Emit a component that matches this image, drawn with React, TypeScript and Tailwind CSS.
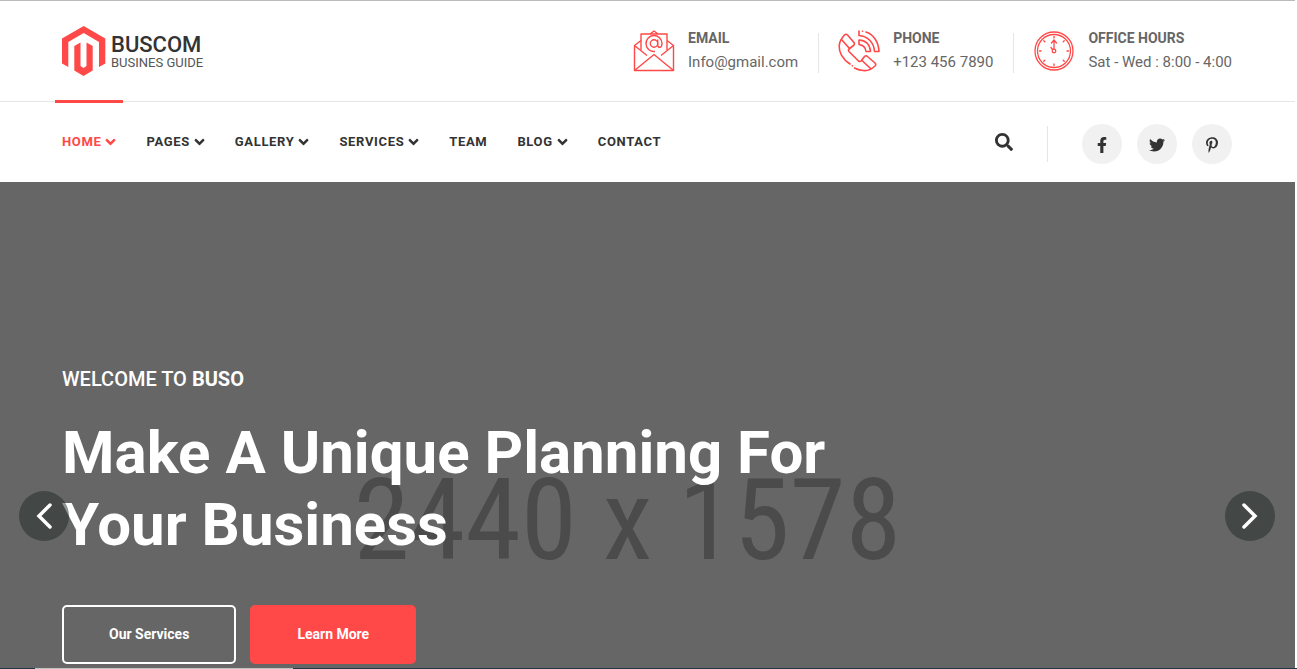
import { useState } from "react";
import { FaAngleDown, FaFacebookF, FaPinterestP, FaSearch, FaTwitter } from "react-icons/fa";

const menu = [
  { label: "HOME", dropdown: true },
  { label: "PAGES", dropdown: true },
  { label: "GALLERY", dropdown: true },
  { label: "SERVICES", dropdown: true },
  { label: "TEAM", dropdown: false },
  { label: "BLOG", dropdown: true },
  { label: "CONTACT", dropdown: false },
];

const socials = [
  { name: "Facebook", Icon: FaFacebookF },
  { name: "Twitter", Icon: FaTwitter },
  { name: "Pinterest", Icon: FaPinterestP },
];

const clockTicks = [0, 45, 90, 135, 180, 225, 270, 315];

function Logo() {
  return (
    <a href="#" className="flex items-center gap-[5px]">
      <svg width="44" height="50" viewBox="0 0 44 50" fill="#ff4848">
        <path d="M21.700 0L43.300 12.500V37.500L37 41V16L21.700 7L6.300 16V41L0 37.500V12.500Z" />
        <path d="M12.300 20L18.500 16.500V40L21.500 42L24.500 40V16.500L30.700 20V44.500L21.500 50L12.300 44.500Z" />
      </svg>
      <span className="flex flex-col">
        <span className="text-[22px] leading-6 font-medium text-[#333]">BUSCOM</span>
        <span className="text-[13px] leading-3 text-[#555]">BUSINES GUIDE</span>
      </span>
    </a>
  );
}

function MailIcon() {
  return (
    <svg width="42" height="42" viewBox="0 0 42 42" fill="none" stroke="#ff4848" strokeWidth="1.400" strokeLinejoin="round">
      <path d="M1.500 15.500V40.500H40.500V15.500L34 10.500M8 10.500L1.500 15.500L14 25.500M40.500 15.500L28 25.500" />
      <path d="M8 20V4H34V20M17 4L21 1L25 4" />
      <path d="M1.500 40.500L21 24.500L40.500 40.500" />
      <circle cx="21" cy="13.500" r="3.700" />
      <path d="M24.700 9.500V15C24.700 18.500 29 18 29 13.500A8 8 0 1 0 22 21.500" />
    </svg>
  );
}

function PhoneIcon() {
  return (
    <svg width="42" height="42" viewBox="0 0 42 42" fill="none" stroke="#ff4848" strokeWidth="1.600" strokeLinecap="round" strokeLinejoin="round">
      <path d="M12 34C5 29.500 0 22 1.500 14Q2 10 6.500 5Q8 3.500 9.500 5L16 12.500Q17 14 15.500 15.500L11 19Q10 20 11 21.500L20.500 31Q22 32 23 31L26.500 26.500Q28 25 29.500 26.500L37 33Q38.500 34.500 37 36Q31 41.500 25 40.500Q20 40 16.500 38" />
      <path d="M3.500 9.500L11.500 18.500M24 30.500L32.500 38.500M14.300 35.700L14.400 35.800" />
      <path d="M21 1V5.500C29.500 6 36 12.500 36.500 21.500H41C40.500 11 34.500 4 28 2M24.500 1.200L24.600 1.200" />
      <path d="M21 10V14.500C25 15 27.500 17.500 28 21.500H32.500C32 15 28 10.500 21 10Z" />
    </svg>
  );
}

function ClockIcon() {
  return (
    <svg width="42" height="42" viewBox="0 0 42 42" fill="none" stroke="#ff4848" strokeWidth="1.300" strokeLinecap="round">
      <circle cx="21" cy="21" r="19" />
      <circle cx="21" cy="21" r="16.500" />
      {clockTicks.map((angle) => (
        <path key={angle} d="M21 6.500V8" transform={`rotate(${angle} 21 21)`} />
      ))}
      <circle cx="21" cy="21" r="1.800" />
      <path d="M21 19V10.500M18.500 13L21 10L23.500 13M19.500 19.500L18 17.500" />
    </svg>
  );
}

const contacts = [
  { title: "EMAIL", text: "Info@gmail.com", Icon: MailIcon },
  { title: "PHONE", text: "+123 456 7890", Icon: PhoneIcon },
  { title: "OFFICE HOURS", text: "Sat - Wed : 8:00 - 4:00", Icon: ClockIcon },
];

function Header() {
  const [active, setActive] = useState("HOME");

  return (
    <header className="border-t border-[#bbb] bg-white">
      {/* Top bar */}
      <div className="border-b border-[#e5e5e5]">
        <div className="mx-auto flex h-[100px] max-w-[1171px] items-center justify-between pr-px">
          <Logo />
          <ul className="flex pt-1">
            {contacts.map(({ title, text, Icon }) => (
              <li
                key={title}
                className="flex h-10 items-center gap-[13px] border-r border-[#e5e5e5] pr-5 pl-[19px] last:border-r-0 last:pr-0"
              >
                <div className="pb-1">
                  <Icon />
                </div>
                <div className="pb-1.5 text-[#666]">
                  <h2 className="text-sm leading-6 font-bold">{title}</h2>
                  <p className="text-[15px] leading-6">{text}</p>
                </div>
              </li>
            ))}
          </ul>
        </div>
      </div>

      {/* Navigation */}
      <div className="mx-auto flex h-20 max-w-[1171px] items-center justify-between pr-px">
        <nav className="-ml-[7px] flex h-full gap-4">
          {menu.map((item) => (
            <a
              key={item.label}
              href="#"
              onClick={() => setActive(item.label)}
              className={`-mt-0.5 flex items-center gap-1 border-t-3 px-[7px] pb-0.5 text-[13px] font-bold tracking-wider ${
                item.label === active ? "border-[#ff4848] text-[#ff4848]" : "border-transparent text-[#333]"
              }`}
            >
              {item.label}
              {item.dropdown && <FaAngleDown className="h-4 w-[11px]" />}
            </a>
          ))}
        </nav>
        <div className="flex items-center pt-1">
          <button type="button" aria-label="Search" className="pb-1 text-[#333]">
            <FaSearch size={18} />
          </button>
          <div className="mr-[34px] ml-[34px] h-9 w-px bg-[#e5e5e5]" />
          <div className="flex gap-[15px]">
            {socials.map(({ name, Icon }) => (
              <a
                key={name}
                href="#"
                aria-label={name}
                className="flex h-10 w-10 items-center justify-center rounded-full bg-[#f1f1f1] pt-0.5 text-[#333]"
              >
                <Icon size={16} />
              </a>
            ))}
          </div>
        </div>
      </div>
    </header>
  );
}

function Hero() {
  return (
    <section className="relative bg-[#666] pt-[182px] pb-1">
      <div className="absolute top-[270px] right-10 left-0 text-center font-['Liberation_Sans_Narrow','Roboto_Condensed','Liberation_Sans',sans-serif] text-[113px] leading-[138px] text-[#4b4b4b]">
        2440 x 1578
      </div>

      <div className="relative mx-auto max-w-[1171px] text-white">
        <p className="text-xl leading-[30px] font-medium">
          WELCOME TO <b>BUSO</b>
        </p>
        <h1 className="mt-[23px] max-w-[800px] text-[60px] leading-[72px] font-bold">Make A Unique Planning For Your Business</h1>
        <div className="mt-11 flex gap-[14px] text-sm font-bold">
          <button type="button" className="h-[59px] rounded-[5px] border-2 border-white px-[45px] pb-0.5">
            Our Services
          </button>
          <button type="button" className="h-[59px] rounded-[5px] bg-[#ff4848] px-[47px] pb-0.5">
            Learn More
          </button>
        </div>
      </div>

      {/* Slider arrows */}
      <button
        type="button"
        aria-label="Previous slide"
        className="absolute top-[309px] left-[19px] flex h-[50px] w-[50px] items-center justify-center rounded-full bg-[#202824]/50"
      >
        <svg width="16" height="26" viewBox="0 0 16 26" fill="none" stroke="#fff" strokeWidth="3.500" strokeLinecap="round">
          <path d="M14 2L3 13L14 24" />
        </svg>
      </button>
      <button
        type="button"
        aria-label="Next slide"
        className="absolute top-[309px] right-5 flex h-[50px] w-[50px] items-center justify-center rounded-full bg-[#202824]/50"
      >
        <svg width="16" height="26" viewBox="0 0 16 26" fill="none" stroke="#fff" strokeWidth="3.500" strokeLinecap="round">
          <path d="M2 2L13 13L2 24" />
        </svg>
      </button>
    </section>
  );
}

export default function App() {
  return (
    <div className="bg-white font-[Roboto,sans-serif]">
      <div className="pr-0.5">
        <Header />
        <Hero />
      </div>
      <div className="flex h-px bg-[#203848]">
        <div className="ml-[35px] w-[258px] bg-[#c4c4c4]" />
      </div>
    </div>
  );
}
